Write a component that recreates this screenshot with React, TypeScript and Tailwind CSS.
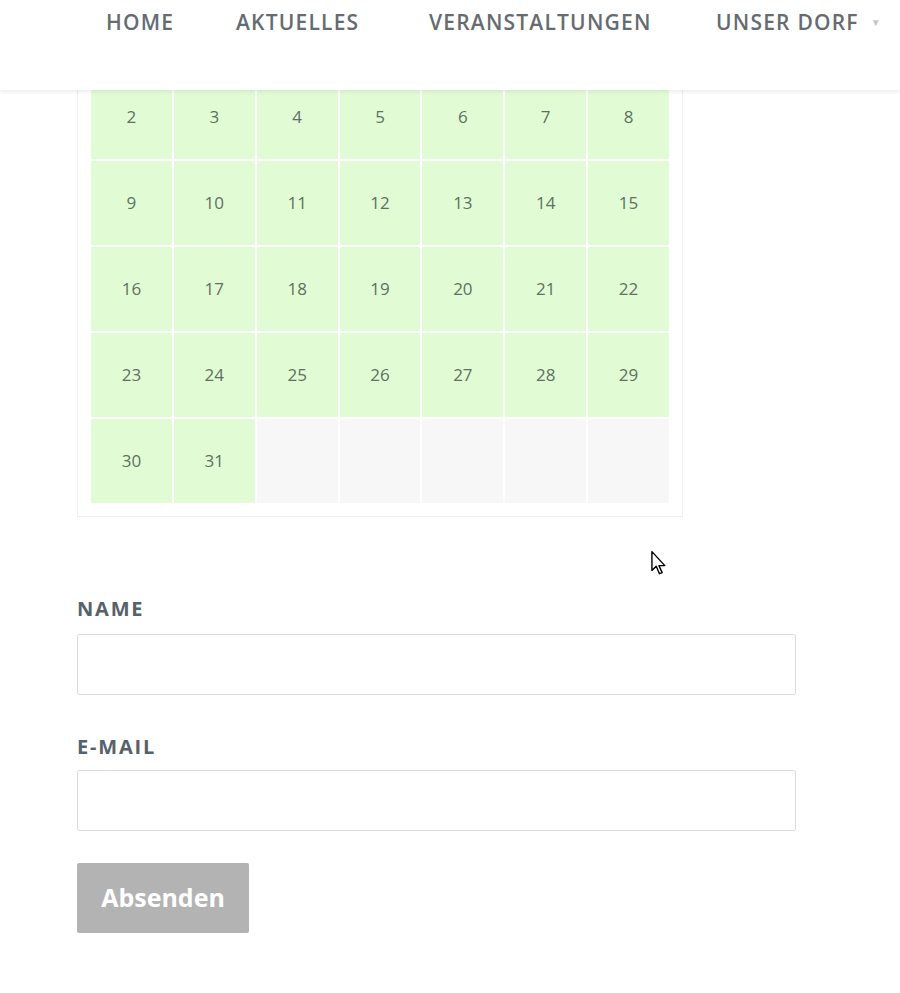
import React from "react";

const rows: (number | null)[][] = [
  [2, 3, 4, 5, 6, 7, 8],
  [9, 10, 11, 12, 13, 14, 15],
  [16, 17, 18, 19, 20, 21, 22],
  [23, 24, 25, 26, 27, 28, 29],
  [30, 31, null, null, null, null, null],
];

export default function App() {
  const font = { fontFamily: '"Open Sans", "Noto Sans", sans-serif' };
  return (
    <div className="relative w-[900px] h-[993px] overflow-hidden bg-white" style={font}>
      {/* Fixed header over content */}
      <header className="absolute left-0 top-0 z-10 w-full h-[90px] bg-white shadow-[0_2px_4px_rgba(0,0,0,0.08)]">
        <nav className="flex items-start pl-[106px] pt-[7px] text-[21px] font-semibold tracking-[1.2px] text-[#666b71]">
          <span className="w-[130px]">HOME</span>
          <span className="w-[193px]">AKTUELLES</span>
          <span className="w-[287px]">VERANSTALTUNGEN</span>
          <span className="flex items-center">
            UNSER DORF
            <span className="ml-[12px] text-[10px] text-[#c8c8c8]">▼</span>
          </span>
        </nav>
      </header>

      {/* Content */}
      <main className="pt-[61px] pl-[77px]">
        <div className="w-[606px] border border-[#eeeeee] p-[13px] pb-[13px]">
          <div className="grid grid-cols-7 gap-[2px]">
            {rows.flat().map((d, i) => (
              <div
                key={i}
                className={
                  "h-[84px] flex items-center justify-center text-[17px] text-[#5f705f] " +
                  (d === null ? "bg-[#f7f7f7]" : "bg-[#e1fcd5]")
                }
              >
                {d}
              </div>
            ))}
          </div>
        </div>

        <form className="mt-[79px] w-[719px]">
          <label className="block text-[20px] font-bold tracking-[1.8px] text-[#56616b] leading-[26px]">
            NAME
          </label>
          <div className="mt-[12px] h-[61px] rounded-[2px] border border-[#dcdcdc] bg-white" />
          <label className="mt-[39px] block text-[20px] font-bold tracking-[1.8px] text-[#56616b] leading-[26px]">
            E-MAIL
          </label>
          <div className="mt-[10px] h-[61px] rounded-[2px] border border-[#dcdcdc] bg-white" />
          <button
            type="button"
            className="mt-[32px] h-[70px] w-[172px] rounded-[2px] bg-[#b3b3b3] text-[25px] font-bold text-white"
          >
            Absenden
          </button>
        </form>
      </main>

      {/* Mouse cursor */}
      <svg className="absolute left-[650px] top-[550px]" width="20" height="28" viewBox="0 0 18 26">
        <path
          d="M1.5 1.5 L1.5 19 L5.5 15 L8.5 22 L11 21 L8 14.5 L13.5 14.5 Z"
          fill="white"
          stroke="black"
          strokeWidth="1.3"
          strokeLinejoin="round"
        />
      </svg>
    </div>
  );
}
